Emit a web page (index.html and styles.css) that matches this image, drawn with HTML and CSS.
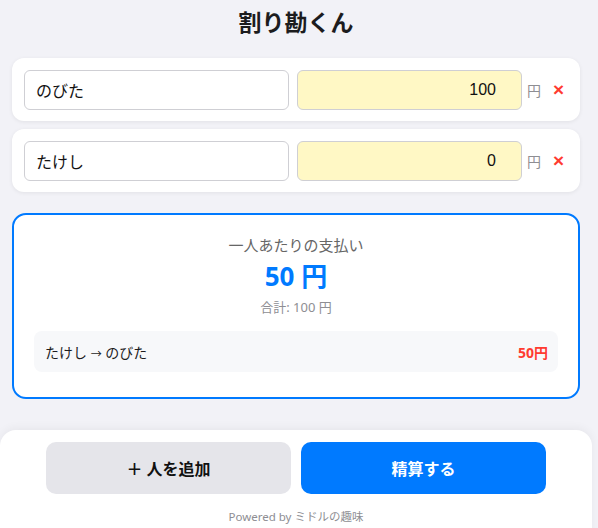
FILE: index.html
```html
<!DOCTYPE html>
<html lang="ja">
<head>
<meta charset="utf-8">
<title>割り勘くん</title>
<link rel="stylesheet" href="styles.css">
</head>
<body>
<div class="app">
  <h1 class="title">割り勘くん</h1>
  <div class="list">
    <div class="card">
      <input class="name" type="text" value="のびた">
      <input class="amount" type="text" value="100">
      <span class="yen">円</span>
      <span class="del">×</span>
    </div>
    <div class="card">
      <input class="name" type="text" value="たけし">
      <input class="amount" type="text" value="0">
      <span class="yen">円</span>
      <span class="del">×</span>
    </div>
  </div>
  <div class="result">
    <div class="label">一人あたりの支払い</div>
    <div class="per">50 円</div>
    <div class="total">合計: 100 円</div>
    <div class="transfer">
      <span class="who">たけし <span class="arrow">→</span> のびた</span>
      <span class="pay">50円</span>
    </div>
  </div>
  <div class="footer">
    <div class="buttons">
      <button class="btn add">＋ 人を追加</button>
      <button class="btn calc">精算する</button>
    </div>
    <div class="powered">Powered by ミドルの趣味</div>
  </div>
</div>
</body>
</html>
```
FILE: styles.css
```css
* { box-sizing: border-box; }
html, body { margin: 0; padding: 0; }
body {
  background: #f2f2f7;
  font-family: "Noto Sans", "Noto Sans CJK JP", sans-serif;
  color: #1c1c1e;
  overflow: hidden;
}
.app { width: 592px; }
.title {
  margin: 0;
  padding-top: 6px;
  font-size: 23px;
  line-height: 32px;
  font-weight: 700;
  text-align: center;
  color: #1c1c1e;
}
.list {
  margin-top: 20px;
  padding: 0 12px;
  display: flex;
  flex-direction: column;
  gap: 8px;
}
.card {
  background: #fff;
  border-radius: 12px;
  height: 63px;
  padding: 0 12px;
  display: flex;
  align-items: center;
  box-shadow: 0 1px 4px rgba(0,0,0,0.07);
}
.card input {
  height: 40px;
  border: 1px solid #cfcfd4;
  border-radius: 6px;
  font-family: "Liberation Sans", "Noto Sans CJK JP", sans-serif;
  font-size: 16px;
  color: #111;
  outline: none;
}
.name {
  width: 265px;
  padding: 0 11px;
  background: #fff;
}
.amount {
  width: 225px;
  margin-left: 8px;
  padding: 0 25px 0 10px;
  text-align: right;
  background: #fff8c5;
}
.yen {
  margin-left: 5px;
  font-size: 14px;
  color: #8e8e93;
}
.del {
  margin-left: 12px;
  font-size: 19px;
  line-height: 20px;
  font-weight: 700;
  color: #ff3b30;
  font-family: "Liberation Sans", sans-serif;
}
.result {
  margin: 21px 12px 0;
  border: 2px solid #007aff;
  border-radius: 14px;
  background: #fff;
  padding: 20px 20px 25px;
  text-align: center;
}
.label {
  font-size: 15px;
  line-height: 21px;
  color: #666;
}
.per {
  margin-top: 2px;
  font-size: 26px;
  line-height: 36px;
  font-weight: 700;
  color: #007aff;
}
.total {
  margin-top: 4px;
  font-size: 13px;
  line-height: 18px;
  color: #8e8e93;
}
.transfer {
  margin-top: 15px;
  height: 41px;
  background: #f7f8fa;
  border-radius: 8px;
  padding: 0 10px 0 11px;
  display: flex;
  align-items: center;
  justify-content: space-between;
  font-size: 14px;
}
.who { color: #1c1c1e; }
.arrow { font-size: 11px; }
.pay { color: #ff3b30; font-weight: 700; }
.footer {
  margin-top: 31px;
  background: #fff;
  border-radius: 16px 16px 0 0;
  padding: 12px 46px 20px;
  box-shadow: 0 -2px 10px rgba(0,0,0,0.05);
}
.buttons {
  display: flex;
  gap: 10px;
}
.btn {
  flex: 1;
  height: 52px;
  border: none;
  border-radius: 10px;
  font-family: "Noto Sans", "Noto Sans CJK JP", sans-serif;
  font-size: 16px;
  font-weight: 700;
}
.add { background: #e5e5ea; color: #111; }
.calc { background: #007aff; color: #fff; }
.powered {
  margin-top: 15px;
  text-align: center;
  font-size: 11.5px;
  line-height: 16px;
  color: #8e8e93;
}
```
